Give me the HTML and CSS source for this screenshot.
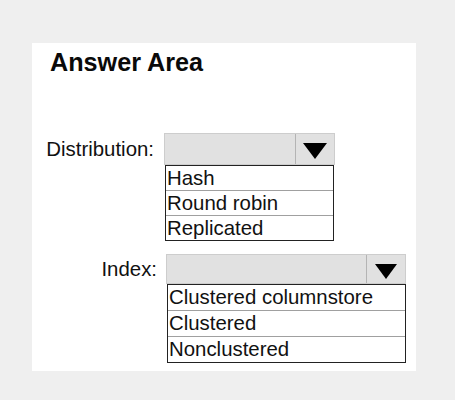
FILE: index.html
```html
<!DOCTYPE html>
<html>
<head>
<meta charset="utf-8">
<link rel="stylesheet" href="styles.css">
</head>
<body>
<div class="panel">
  <h1 class="title">Answer Area</h1>
  <div class="field field-dist">
    <div class="label">Distribution:</div>
    <div class="dropdown">
      <div class="select">
        <div class="select-value"></div>
        <div class="select-arrow"><span class="tri"></span></div>
      </div>
      <ul class="options">
        <li>Hash</li>
        <li>Round robin</li>
        <li>Replicated</li>
      </ul>
    </div>
  </div>
  <div class="field field-index">
    <div class="label">Index:</div>
    <div class="dropdown">
      <div class="select">
        <div class="select-value"></div>
        <div class="select-arrow"><span class="tri"></span></div>
      </div>
      <ul class="options">
        <li>Clustered columnstore</li>
        <li>Clustered</li>
        <li>Nonclustered</li>
      </ul>
    </div>
  </div>
</div>
</body>
</html>
```
FILE: styles.css
```css
html, body {
  margin: 0;
  padding: 0;
  background: #efefef;
}
body {
  padding: 43px 0 0 32px;
  font-family: "Liberation Sans", Arial, sans-serif;
  color: #111;
  width: 455px;
  height: 400px;
  box-sizing: border-box;
}
.panel {
  width: 384px;
  height: 328px;
  background: #fff;
  box-sizing: border-box;
  padding-top: 5px;
}
.title {
  margin: 0;
  padding-left: 18px;
  font-size: 25.2px;
  line-height: 28px;
  font-weight: bold;
  color: #0a0a0a;
}
.field {
  display: flex;
  align-items: flex-start;
}
.field-dist {
  margin-top: 57px;
}
.field-index {
  margin-top: 13px;
}
.label {
  font-size: 20.4px;
  text-align: right;
  margin-right: 10px;
}
.field-dist .label {
  width: 122px;
  line-height: 32px;
}
.field-index .label {
  width: 125px;
  line-height: 30px;
  margin-right: 9px;
}
.dropdown {
  display: flex;
  flex-direction: column;
}
.field-dist .dropdown { width: 171px; }
.field-index .dropdown { width: 240px; }
.select {
  display: flex;
  background: #e1e1e1;
  border: 1px solid #cdcdcd;
  box-sizing: border-box;
}
.field-dist .select { height: 32px; }
.field-index .select { height: 30px; }
.select-value {
  flex: 1;
}
.select-arrow {
  width: 39px;
  border-left: 1px solid #b4b4b4;
  display: flex;
  align-items: center;
  justify-content: center;
  padding-top: 4px;
  box-sizing: border-box;
}
.tri {
  width: 0;
  height: 0;
  border-left: 12px solid transparent;
  border-right: 12px solid transparent;
  border-top: 16px solid #000;
}
.field-index .tri {
  border-left-width: 11.5px;
  border-right-width: 11.5px;
  border-top-width: 15px;
}
.options {
  list-style: none;
  margin: 0 0 0 1px;
  padding: 0;
  border: 1px solid #222;
  background: #fff;
}
.field-dist .options { width: 169px; box-sizing: border-box; }
.field-index .options { width: 239px; box-sizing: border-box; }
.options li {
  font-size: 20.4px;
  padding-left: 1px;
  border-top: 1px solid #a0a0a0;
  white-space: nowrap;
}
.options li:first-child {
  border-top: none;
}
.field-dist .options li {
  height: 24px;
  line-height: 24px;
}
.field-index .options li {
  height: 25px;
  line-height: 25px;
}
```
